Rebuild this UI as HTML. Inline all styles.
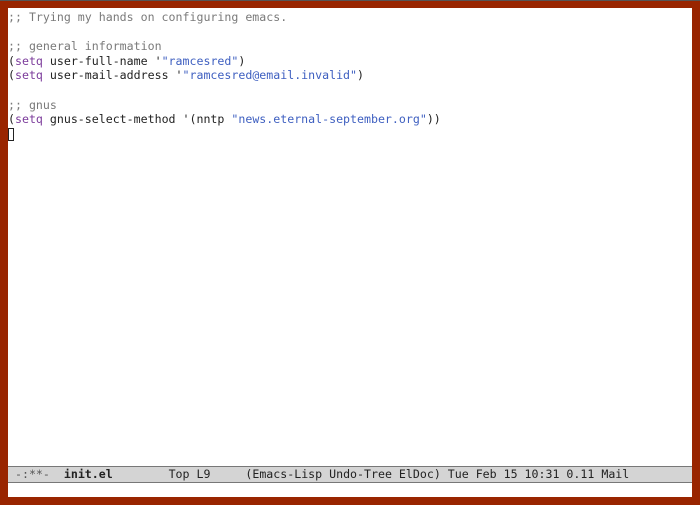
<!DOCTYPE html>
<html><head><meta charset="utf-8"><style>
html,body{margin:0;padding:0}
body{width:700px;height:505px;background:#992500;position:relative;overflow:hidden;font-family:"DejaVu Sans Mono","Liberation Mono",monospace;font-size:11.6px}
.top{position:absolute;left:0;top:0;width:700px;height:1px;background:#555}
.win{position:absolute;left:8px;top:8px;width:684px;height:489px;background:#fff}
.txt{position:absolute;left:0;top:2px;white-space:pre;line-height:14.6px;color:#222}
.c{color:#7a7a7a}.k{color:#7b3b9b}.s{color:#3e5fc0}
.cur{display:inline-block;width:6px;height:13px;border:1px solid #222;vertical-align:-3px;box-sizing:border-box}
.mode{position:absolute;left:0;top:458px;width:684px;height:15px;background:#d4d4d4;border-top:1px solid #777;border-bottom:1px solid #777;white-space:pre;line-height:15px;color:#222}
</style></head><body>
<div class="top"></div>
<div class="win">
<div class="txt"><span class="c">;; Trying my hands on configuring emacs.</span>

<span class="c">;; general information</span>
(<span class="k">setq</span> user-full-name '<span class="s">"ramcesred"</span>)
(<span class="k">setq</span> user-mail-address '<span class="s">"ramcesred@email.invalid"</span>)

<span class="c">;; gnus</span>
(<span class="k">setq</span> gnus-select-method '(nntp <span class="s">"news.eternal-september.org"</span>))
<span class="cur"></span></div>
<div class="mode"> <span style="color:#555">-:**-</span>  <b>init.el</b>        Top L9     (Emacs-Lisp Undo-Tree ElDoc) Tue Feb 15 10:31 0.11 Mail</div>
</div>
</body></html>
